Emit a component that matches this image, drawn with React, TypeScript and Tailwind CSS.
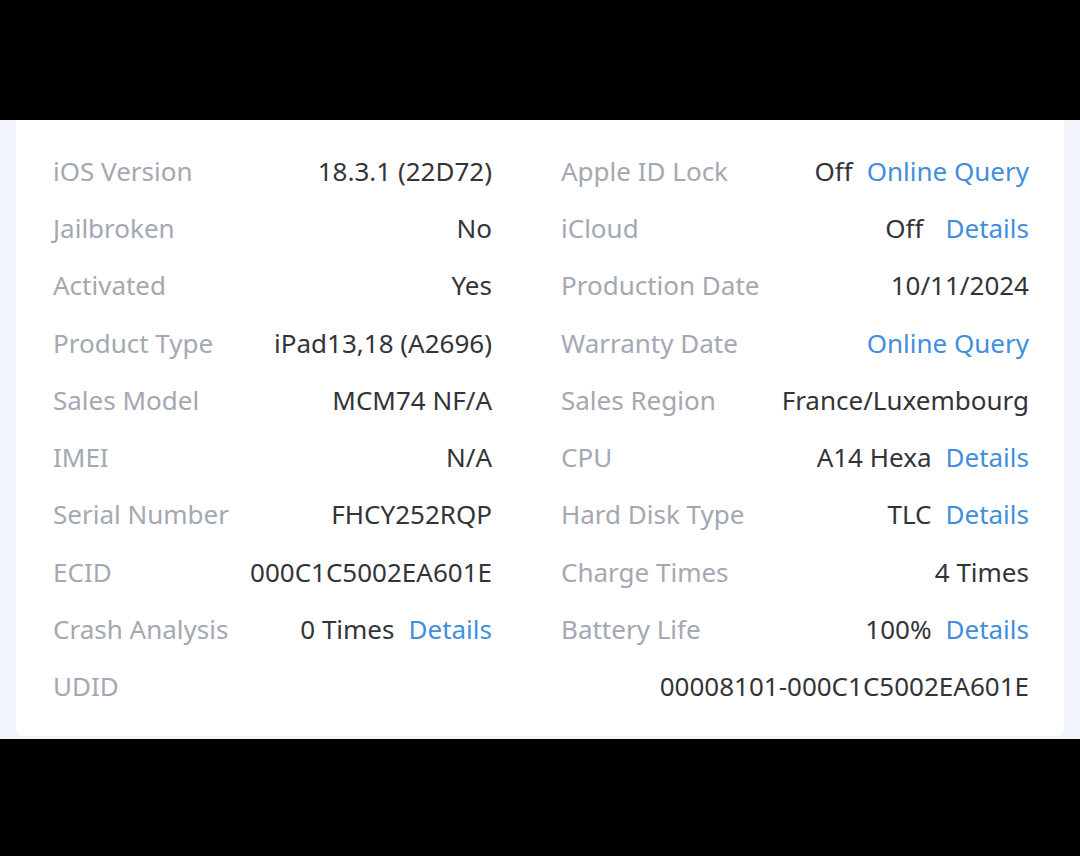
import React from 'react';

interface Row {
  label: string;
  value: string;
  link?: string;
  gap?: string;
}

const left: Row[] = [
  { label: 'iOS Version', value: '18.3.1 (22D72)' },
  { label: 'Jailbroken', value: 'No' },
  { label: 'Activated', value: 'Yes' },
  { label: 'Product Type', value: 'iPad13,18 (A2696)' },
  { label: 'Sales Model', value: 'MCM74 NF/A' },
  { label: 'IMEI', value: 'N/A' },
  { label: 'Serial Number', value: 'FHCY252RQP' },
  { label: 'ECID', value: '000C1C5002EA601E' },
  { label: 'Crash Analysis', value: '0 Times', link: 'Details' },
];

const right: Row[] = [
  { label: 'Apple ID Lock', value: 'Off', link: 'Online Query' },
  { label: 'iCloud', value: 'Off', link: 'Details', gap: 'ml-[22px]' },
  { label: 'Production Date', value: '10/11/2024' },
  { label: 'Warranty Date', value: '', link: 'Online Query' },
  { label: 'Sales Region', value: 'France/Luxembourg' },
  { label: 'CPU', value: 'A14 Hexa', link: 'Details' },
  { label: 'Hard Disk Type', value: 'TLC', link: 'Details' },
  { label: 'Charge Times', value: '4 Times' },
  { label: 'Battery Life', value: '100%', link: 'Details' },
];

const InfoRow: React.FC<{ row: Row }> = ({ row }) => (
  <div className="flex h-[57.3px] items-center justify-between">
    <span className="text-[#a3a8b2]">{row.label}</span>
    <span className="flex items-center">
      {row.value && <span className="text-[#333438]">{row.value}</span>}
      {row.link && (
        <span className={`${row.value ? row.gap ?? 'ml-[14px]' : ''} text-[#3f8fdc]`}>{row.link}</span>
      )}
    </span>
  </div>
);

const App: React.FC = () => {
  return (
    <div className="flex h-[856px] w-[1080px] flex-col bg-black">
      <div className="h-[120px] shrink-0" />
      <div className="bg-[#f1f4fa] pl-4 pr-4 pb-[3px]">
        <div
          className="rounded-b-lg bg-white pl-[37px] pr-[35px] pt-[22px] pb-[21px] text-[26px] leading-none"
          style={{ fontFamily: '"Noto Sans", "Open Sans", sans-serif' }}
        >
          <div className="flex gap-[69px]">
            <div className="w-[439px]">
              {left.map((r) => (
                <InfoRow key={r.label} row={r} />
              ))}
            </div>
            <div className="w-[468px]">
              {right.map((r) => (
                <InfoRow key={r.label} row={r} />
              ))}
            </div>
          </div>
          <div className="flex h-[57.3px] items-center justify-between">
            <span className="text-[#a3a8b2]">UDID</span>
            <span className="text-[#333438]">00008101-000C1C5002EA601E</span>
          </div>
        </div>
      </div>
      <div className="flex-1" />
    </div>
  );
};

export default App;
